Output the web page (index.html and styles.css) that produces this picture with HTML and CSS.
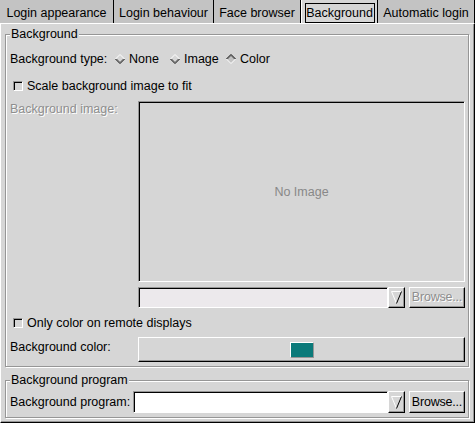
FILE: index.html
```html
<!DOCTYPE html>
<html>
<head>
<meta charset="utf-8">
<title>Login settings</title>
<link rel="stylesheet" href="styles.css">
</head>
<body>
<div class="notebook">
  <div class="tabs">
    <div class="tab t1">Login appearance</div>
    <div class="tab t2">Login behaviour</div>
    <div class="tab t3">Face browser</div>
    <div class="tab t4 active"><span class="focus">Background</span></div>
    <div class="tab t5">Automatic login</div>
  </div>
  <div class="page">
    <div class="frame frame-bg">
      <div class="frame-title">Background</div>
      <div class="row row-type">
        <span class="type-label">Background type:</span>
        <span class="radio r-none">
          <svg class="diamond" width="10" height="10" viewBox="0 0 10 10"><polygon points="5,0.5 9.5,5 5,9.5 0.5,5" fill="#d6d6d6"/><polyline points="0.5,5 5,0.5 9.5,5" fill="none" stroke="#fff"/><polyline points="0.5,5 5,9.5 9.5,5" fill="none" stroke="#000"/><polyline points="2,5 5,8 8,5" fill="none" stroke="#969696"/></svg>None</span>
        <span class="radio r-image">
          <svg class="diamond" width="10" height="10" viewBox="0 0 10 10"><polygon points="5,0.5 9.5,5 5,9.5 0.5,5" fill="#d6d6d6"/><polyline points="0.5,5 5,0.5 9.5,5" fill="none" stroke="#fff"/><polyline points="0.5,5 5,9.5 9.5,5" fill="none" stroke="#000"/><polyline points="2,5 5,8 8,5" fill="none" stroke="#969696"/></svg>Image</span>
        <span class="radio r-color">
          <svg class="diamond" width="10" height="10" viewBox="0 0 10 10"><polygon points="5,0.5 9.5,5 5,9.5 0.5,5" fill="#c3c3c3"/><polyline points="0.5,5 5,0.5 9.5,5" fill="none" stroke="#000"/><polyline points="2,5 5,2 8,5" fill="none" stroke="#969696"/><polyline points="0.5,5 5,9.5 9.5,5" fill="none" stroke="#fff"/></svg>Color</span>
      </div>
      <div class="row row-check">
        <span class="check"></span>Scale background image to fit
      </div>
      <div class="row-image">
        <span class="side-label insensitive">Background image:</span>
        <div class="image-box">No Image</div>
      </div>
      <div class="row-combo">
        <div class="entry entry-off"></div>
        <div class="arrow raised">
          <svg width="11" height="13" viewBox="0 0 11 13"><path d="M0.5 0.5H10.5" stroke="#fff" fill="none"/><path d="M0.5 0.5L5.5 12.5" stroke="#fff" fill="none"/><path d="M10.5 0.5L5.5 12.5" stroke="#000" fill="none"/></svg>
        </div>
        <div class="browse raised insensitive">Browse...</div>
      </div>
      <div class="row row-check2">
        <span class="check"></span>Only color on remote displays
      </div>
      <div class="row-color">
        <span class="side-label color-label">Background color:</span>
        <div class="color-btn raised"><span class="swatch"></span></div>
      </div>
    </div>
    <div class="frame frame-prog">
      <div class="frame-title">Background program</div>
      <div class="row-prog">
        <span class="prog-label">Background program:</span>
        <div class="entry entry-on"></div>
        <div class="arrow raised">
          <svg width="11" height="13" viewBox="0 0 11 13"><path d="M0.5 0.5H10.5" stroke="#fff" fill="none"/><path d="M0.5 0.5L5.5 12.5" stroke="#fff" fill="none"/><path d="M10.5 0.5L5.5 12.5" stroke="#000" fill="none"/></svg>
        </div>
        <div class="browse raised">Browse...</div>
      </div>
    </div>
  </div>
</div>
</body>
</html>
```

FILE: styles.css
```css
html, body {
  margin: 0;
  padding: 0;
}
body {
  background: #d6d6d6;
  font-family: "Liberation Sans", Arial, sans-serif;
  font-size: 12.5px;
  line-height: 15px;
  color: #000;
}
.notebook {
  width: 475px;
  height: 423px;
  display: flex;
  flex-direction: column;
}
.tabs {
  display: flex;
  height: 23px;
  flex: none;
}
.tab {
  box-sizing: border-box;
  height: 23px;
  padding-top: 4px;
  background: #c3c3c3;
  border-right: 1px solid #000;
  display: flex;
  align-items: center;
  justify-content: center;
  white-space: nowrap;
  flex: none;
}
.t1 { width: 114px; }
.t2 { width: 100px; }
.t3 { width: 87px; }
.t4 { width: 77px; }
.t5 { width: 97px; }
.tab.active {
  background: #d6d6d6;
  border-left: 1px solid #fff;
  padding-top: 2px;
}
.focus {
  box-sizing: border-box;
  width: 70px;
  height: 20px;
  padding-top: 1px;
  border: 1px solid #000;
  display: flex;
  align-items: center;
  justify-content: center;
}
.page {
  flex: 1;
  box-sizing: border-box;
  border-top: 1px solid #fff;
  border-left: 1px solid #fff;
  border-right: 1px solid #000;
  border-bottom: 1px solid #000;
  box-shadow: inset -1px -1px 0 #969696;
  padding: 0 5px 4px 4px;
  display: flex;
  flex-direction: column;
}
.frame {
  border: 1px solid #969696;
  box-shadow: inset 1px 1px 0 #fff, 1px 1px 0 #fff;
  padding: 0 3px 4px 4px;
  display: flex;
  flex-direction: column;
}
.frame-bg { margin-top: 10px; }
.frame-prog { margin-top: 13px; }
.frame-title {
  align-self: flex-start;
  margin-top: -8px;
  padding: 0 1px;
  background: #d6d6d6;
  white-space: nowrap;
}
.row {
  display: flex;
  align-items: center;
  white-space: nowrap;
}
.row-type { margin-top: 7px; height: 20px; }
.type-label { width: 105px; flex: none; }
.radio {
  display: flex;
  align-items: center;
  flex: none;
}
.r-none { width: 55px; }
.r-image { width: 56px; }
.diamond { margin-right: 4px; flex: none; }
.row-check { margin-top: 8px; height: 18px; }
.row-check2 { margin-top: 6px; height: 18px; }
.check {
  box-sizing: border-box;
  width: 10px;
  height: 10px;
  margin: 0 4px 0 3px;
  border: 1px solid;
  border-color: #969696 #fff #fff #969696;
  box-shadow: inset 1px 1px 0 #000;
  background: #d6d6d6;
  flex: none;
}
.row-image {
  margin-top: 6px;
  height: 181px;
  display: flex;
}
.side-label {
  width: 128px;
  flex: none;
  white-space: nowrap;
}
.row-image .side-label { padding-top: 1px; }
.insensitive {
  color: #8e8e8e;
  text-shadow: 1px 1px 0 #fff;
}
.image-box {
  flex: 1;
  box-sizing: border-box;
  padding-top: 1px;
  border: 1px solid;
  border-color: #969696 #fff #fff #969696;
  box-shadow: inset 1px 1px 0 #000;
  display: flex;
  align-items: center;
  justify-content: center;
  color: #888;
}
.row-combo {
  margin-top: 5px;
  height: 21px;
  display: flex;
  padding-left: 128px;
}
.entry {
  flex: 1;
  box-sizing: border-box;
  border: 1px solid;
  border-color: #969696 #fff #fff #969696;
  box-shadow: inset 1px 1px 0 #000;
}
.entry-off { background: #ece9ec; }
.entry-on { background: #fff; }
.raised {
  box-sizing: border-box;
  border: 1px solid;
  border-color: #fff #000 #000 #fff;
  box-shadow: inset -1px -1px 0 #969696;
  background: #d6d6d6;
}
.arrow {
  width: 17px;
  flex: none;
  display: flex;
  align-items: center;
  justify-content: center;
}
.browse {
  width: 56px;
  flex: none;
  margin-left: 4px;
  display: flex;
  align-items: center;
  justify-content: center;
  white-space: nowrap;
  letter-spacing: -0.2px;
}
.row-color {
  margin-top: 5px;
  height: 25px;
  display: flex;
}
.color-label { padding-top: 3px; }
.color-btn {
  flex: 1;
  display: flex;
  align-items: center;
  justify-content: center;
}
.swatch {
  box-sizing: border-box;
  width: 24px;
  height: 16px;
  background: #0b7a7a;
  border: 1px solid;
  border-color: #fff #969696 #969696 #fff;
}
.row-prog {
  margin-top: 3px;
  height: 22px;
  display: flex;
}
.prog-label {
  width: 123px;
  flex: none;
  align-self: center;
  white-space: nowrap;
}
```
